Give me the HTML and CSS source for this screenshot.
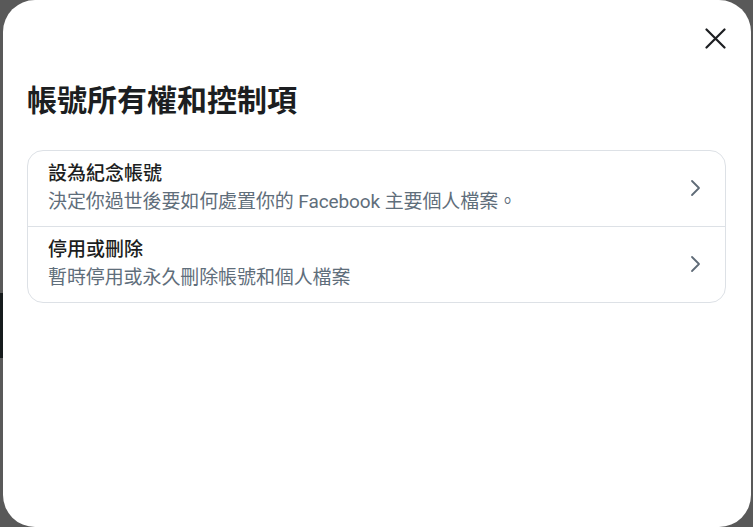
FILE: index.html
```html
<!DOCTYPE html>
<html lang="zh-Hant">
<head>
<meta charset="utf-8">
<title>帳號所有權和控制項</title>
<link rel="stylesheet" href="styles.css">
</head>
<body>
<div class="page">
  <div class="edge"><div class="edge-block"></div></div>
  <div class="modal">
    <div class="modal-head">
      <button class="close" aria-label="關閉">
        <svg width="21" height="21" viewBox="0 0 21 21"><path d="M1.5 1.5 L19.5 19.5 M19.5 1.5 L1.5 19.5" stroke="#1c1e21" stroke-width="2.2" stroke-linecap="round" fill="none"/></svg>
      </button>
    </div>
    <h1 class="title">帳號所有權和控制項</h1>
    <div class="card">
      <div class="row">
        <div class="row-text">
          <div class="row-title">設為紀念帳號</div>
          <div class="row-sub">決定你過世後要如何處置你的 Facebook 主要個人檔案。</div>
        </div>
        <svg class="chev" width="24" height="24" viewBox="0 0 24 24"><path d="M9 5 L16 12 L9 19" stroke="#5f6b77" stroke-width="1.8" stroke-linecap="round" stroke-linejoin="round" fill="none"/></svg>
      </div>
      <div class="row">
        <div class="row-text">
          <div class="row-title">停用或刪除</div>
          <div class="row-sub">暫時停用或永久刪除帳號和個人檔案</div>
        </div>
        <svg class="chev" width="24" height="24" viewBox="0 0 24 24"><path d="M9 5 L16 12 L9 19" stroke="#5f6b77" stroke-width="1.8" stroke-linecap="round" stroke-linejoin="round" fill="none"/></svg>
      </div>
    </div>
  </div>
</div>
</body>
</html>
```
FILE: styles.css
```css
html, body {
  margin: 0;
  padding: 0;
  height: 100%;
}
body {
  background: #595959;
  font-family: "Roboto", "Noto Sans CJK TC", sans-serif;
  color: #1c1e21;
  overflow: hidden;
}
.page {
  display: flex;
  height: 527px;
}
.edge {
  width: 3px;
  flex: none;
}
.edge-block {
  margin-top: 293px;
  height: 65px;
  background: #161b1c;
}
.modal {
  width: 748px;
  height: 527px;
  flex: none;
  background: #ffffff;
  border-radius: 32px;
  box-sizing: border-box;
  padding: 0 25px 0 24px;
}
.modal-head {
  display: flex;
  justify-content: flex-end;
  padding-top: 28px;
}
.close {
  border: 0;
  background: none;
  padding: 0;
  width: 21px;
  height: 21px;
  display: block;
  cursor: pointer;
}
.close svg {
  display: block;
}
.title {
  margin: 31px 0 0 0;
  font-family: "Noto Sans CJK TC", sans-serif;
  font-size: 30px;
  line-height: 36px;
  font-weight: 600;
  color: #1c1e21;
}
.card {
  margin-top: 34px;
  border: 1px solid #dde1e6;
  border-radius: 16px;
}
.row {
  display: flex;
  align-items: center;
  padding: 9px 18px 10px 20px;
  height: 56px;
}
.row + .row {
  border-top: 1px solid #dde1e6;
}
.row-text {
  flex: 1;
}
.row-title {
  font-size: 19px;
  line-height: 28px;
  font-weight: 500;
  color: #1c1e21;
}
.row-sub {
  font-size: 19px;
  line-height: 28px;
  letter-spacing: -0.1px;
  color: #5f6e7b;
}
.chev {
  flex: none;
  display: block;
}
```
